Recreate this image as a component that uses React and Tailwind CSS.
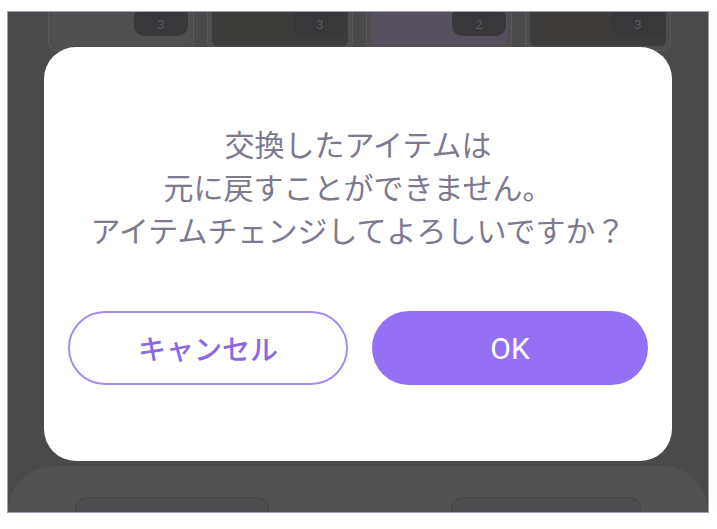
import { useState } from 'react';

const cards = [
  { badge: '3', art: 'bg-[#505050]' },
  { badge: '3', art: 'bg-[#3c3c3a]' },
  { badge: '2', art: 'bg-[#56505e]' },
  { badge: '3', art: 'bg-[#3d3c3a]' },
];

function ItemCard({ badge, art }) {
  return (
    <div className="relative w-[146px] h-[40px] rounded-b-[8px] border border-[#5a5a5a] bg-[#4e4e4e] p-[4px] pt-0">
      <div className={`h-full rounded-b-[5px] ${art}`} />
      {/* count badge */}
      <div className="absolute right-[5px] top-0 w-[54px] h-[24px] rounded-b-[10px] rounded-t-[4px] bg-[#38383a] flex items-center justify-center text-[13px] leading-none text-[#5a5a5e] font-['Roboto',sans-serif]">
        {badge}
      </div>
    </div>
  );
}

export default function App() {
  const [answer, setAnswer] = useState(null);

  return (
    <div className="w-[717px] h-[529px] bg-white pt-[11px] pl-[7px]">
      <div className="relative w-[702px] h-[502px] border-[1.5px] border-[#a19db2] bg-[#4a4a4a] overflow-hidden flex flex-col">

        {/* cards behind the overlay (top cut off) */}
        <div className="flex gap-[13px] pl-[40px] -mt-[1px]">
          {cards.map((c, i) => (
            <ItemCard key={i} {...c} />
          ))}
        </div>

        {/* bottom panel */}
        <div className="mt-auto h-[46px] rounded-t-[56px] bg-[#525252] flex justify-between px-[67px] pt-[31px]">
          <div className="w-[194px] rounded-t-[12px] border border-b-0 border-[#454548] bg-[#4d4d4f]" />
          <div className="w-[190px] rounded-t-[12px] border border-b-0 border-[#454548] bg-[#4d4d4f]" />
        </div>

        {/* confirm dialog */}
        <div className="absolute left-[36px] top-[35px] w-[628px] h-[414px] rounded-[32px] bg-white flex flex-col px-[24px] pt-[75px]">
          <p className="text-center text-[30px] leading-[43px] text-[#7d798f] font-['Noto_Sans_CJK_JP',sans-serif]">
            交換したアイテムは<br />
            元に戻すことができません。<br />
            アイテムチェンジしてよろしいですか？
          </p>

          <div className="flex gap-[24px] mt-[60px]">
            <button
              type="button"
              onClick={() => setAnswer('cancel')}
              className="flex-1 h-[74px] rounded-full border-2 border-[#a88bf1] bg-white text-[#8b68e4] text-[28px] font-medium font-['Noto_Sans_CJK_JP',sans-serif] flex items-center justify-center"
            >
              キャンセル
            </button>
            <button
              type="button"
              onClick={() => setAnswer('ok')}
              className="flex-1 h-[74px] rounded-full bg-[#9470f5] text-white text-[30px] font-normal font-['Roboto',sans-serif] flex items-center justify-center"
            >
              OK
            </button>
          </div>
          {answer && <span className="sr-only">{answer}</span>}
        </div>
      </div>
    </div>
  );
}
